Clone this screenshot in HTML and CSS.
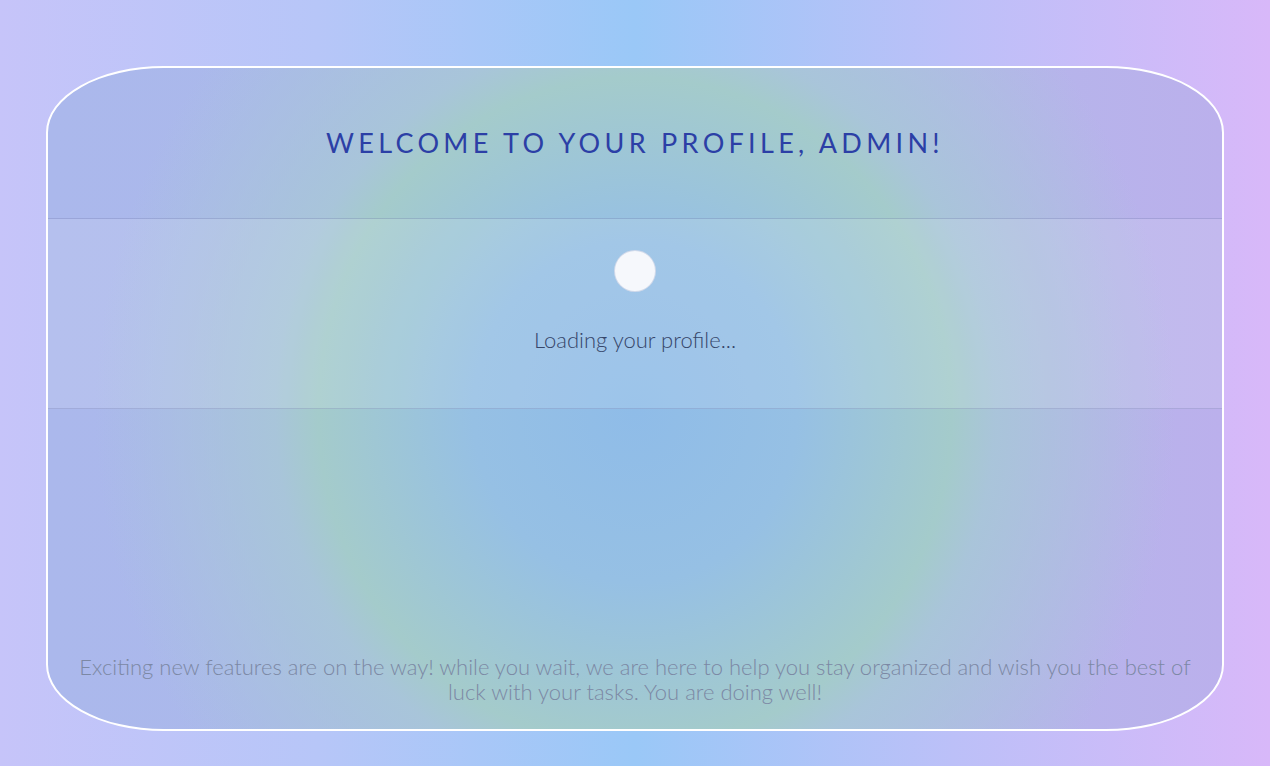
FILE: index.html
```html
<!DOCTYPE html>
<html lang="en">
<head>
<meta charset="utf-8">
<title>Profile</title>
<link rel="stylesheet" href="styles.css">
</head>
<body>
<main class="card">
  <header class="card-header">
    <h1 class="title">WELCOME TO YOUR PROFILE, ADMIN!</h1>
  </header>
  <section class="card-loading">
    <div class="spinner"></div>
    <p class="loading-text">Loading your profile...</p>
  </section>
  <footer class="card-footer">
    <p class="footer-text">Exciting new features are on the way! while you wait, we are here to help you stay organized and wish you the best of luck with your tasks. You are doing well!</p>
  </footer>
</main>
</body>
</html>
```
FILE: styles.css
```css
html, body {
  margin: 0;
  padding: 0;
}
body {
  width: 1270px;
  height: 766px;
  overflow: hidden;
  font-family: "Lato", "Noto Sans", sans-serif;
  background: linear-gradient(90deg, #c6c4f9 0%, #b7c6f8 25%, #9ac8f7 50%, #bcc0f8 75%, #d8b8f9 100%);
  padding-top: 66px;
  box-sizing: border-box;
}
.card {
  margin-left: 46px;
  width: 1178px;
  height: 665px;
  box-sizing: border-box;
  border: 2px solid #ffffff;
  border-radius: 10% / 10%;
  overflow: hidden;
  display: flex;
  flex-direction: column;
  background:
    radial-gradient(ellipse 360px 380px at 50% 52%, #8fbce8 0%, #96c0e4 45%, #a4cbcb 88%, rgba(168, 198, 216, 0.9) 100%, rgba(170, 185, 234, 0) 150%),
    linear-gradient(90deg, #abb8ec 0%, #aab9ea 40%, #aebbe9 60%, #bbb0ec 100%);
}
.card-header {
  height: 150px;
  display: flex;
  align-items: center;
  justify-content: center;
  border-bottom: 1px solid rgba(110, 120, 170, 0.28);
}
.title {
  margin: 0;
  font-weight: 400;
  font-size: 27px;
  letter-spacing: 4.3px;
  color: #2c3fa6;
  padding-bottom: 2px;
}
.card-loading {
  height: 189px;
  display: flex;
  flex-direction: column;
  align-items: center;
  background: rgba(255, 255, 255, 0.12);
  border-bottom: 1px solid rgba(110, 120, 170, 0.28);
}
.spinner {
  margin-top: 31px;
  width: 40px;
  height: 40px;
  border-radius: 50%;
  background: #f6f8fc;
  border: 1px solid rgba(200, 210, 230, 0.8);
}
.loading-text {
  margin: 34px 0 0;
  font-size: 22px;
  font-weight: 300;
  color: #36466a;
}
.card-footer {
  flex: 1;
  display: flex;
  align-items: flex-end;
  justify-content: center;
  padding: 0 20px 25px;
}
.footer-text {
  margin: 0;
  text-align: center;
  font-size: 22px;
  font-weight: 300;
  line-height: 25px;
  color: #7c88a4;
}
```
